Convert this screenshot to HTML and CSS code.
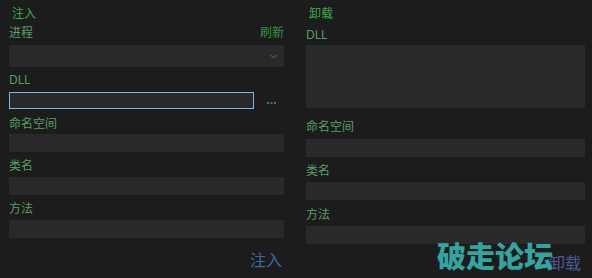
FILE: index.html
```html
<!DOCTYPE html>
<html lang="zh">

<head>
    <meta charset="UTF-8">
    <meta name="viewport" content="width=device-width, initial-scale=1.0">
    <title>注入</title>
    <link rel="stylesheet" href="styles.css">
</head>

<body>
    <main class="panels">
        <!-- 注入 -->
        <section class="panel panel-inject">
            <h2 class="panel-title">注入</h2>
            <div class="label-row l-proc">
                <span class="label">进程</span>
                <a class="refresh" href="#">刷新</a>
            </div>
            <div class="select">
                <svg class="chevron" width="7" height="5" viewBox="0 0 7 5">
                    <polyline points="0.5,1 3.5,4 6.5,1" fill="none" stroke="#6a6a6e" stroke-width="1"/>
                </svg>
            </div>
            <div class="label l-dll">DLL</div>
            <div class="file-row">
                <input class="box box-focus" type="text">
                <svg class="dots" width="9" height="3" viewBox="0 0 9 3">
                    <rect x="0" y="0" width="2" height="2" fill="#2f8a2f"/>
                    <rect x="3.5" y="0" width="2" height="2" fill="#2f8a2f"/>
                    <rect x="7" y="0" width="2" height="2" fill="#2f8a2f"/>
                </svg>
            </div>
            <div class="label l-ns">命名空间</div>
            <input class="box" type="text">
            <div class="label l-cls">类名</div>
            <input class="box" type="text">
            <div class="label l-mth">方法</div>
            <input class="box" type="text">
            <div class="actions"><button class="action">注入</button></div>
        </section>

        <!-- 卸载 -->
        <section class="panel panel-eject">
            <h2 class="panel-title">卸载</h2>
            <div class="label r-dll">DLL</div>
            <div class="list"></div>
            <div class="label r-ns">命名空间</div>
            <input class="box" type="text">
            <div class="label r-cls">类名</div>
            <input class="box" type="text">
            <div class="label r-mth">方法</div>
            <input class="box" type="text">
            <div class="actions actions-eject"><button class="action action-eject">卸载</button></div>
        </section>
    </main>

    <div class="watermark">破走论坛</div>
</body>

</html>
```

FILE: styles.css
```css
body {
    margin: 0;
    padding: 0;
    background-color: #1c1c1c;
    font-family: "Noto Sans", "Noto Sans CJK SC", sans-serif;
    font-size: 12px;
    color: #5c9c6a;
    width: 592px;
    height: 278px;
    overflow: hidden;
    position: relative;
}

.panels {
    display: flex;
    gap: 22px;
    padding-left: 9px;
}

.panel {
    display: flex;
    flex-direction: column;
}

.panel-inject {
    width: 275px;
}

.panel-eject {
    width: 279px;
}

.panel-title {
    margin: 4px 0 0 3px;
    height: 16px;
    line-height: 20px;
    font-size: 12px;
    font-weight: normal;
    color: #3bab4c;
}

.label {
    height: 16px;
    line-height: 20px;
}

.label-row {
    display: flex;
    justify-content: space-between;
    height: 16px;
    line-height: 20px;
}

.refresh {
    color: #3c8f3c;
    text-decoration: none;
}

.box {
    display: block;
    box-sizing: border-box;
    width: 100%;
    height: 18px;
    margin: 0;
    padding: 0 4px;
    border: none;
    background-color: #29292c;
    outline: none;
}

.box-focus {
    width: 245px;
    height: 17px;
    border: 1px solid #82b4e6;
}

.select {
    position: relative;
    height: 22px;
    margin-top: 6px;
    background-color: #29292c;
}

.chevron {
    position: absolute;
    right: 7px;
    top: 9px;
}

.file-row {
    display: flex;
    align-items: flex-end;
    margin-top: 6px;
}

.dots {
    margin: 0 0 4px 13px;
}

.list {
    height: 63px;
    margin-top: 4px;
    background-color: #29292c;
}

/* vertical rhythm, left */
.l-proc { margin-top: 3px; }
.l-dll { margin-top: 3px; }
.l-ns { margin-top: 5px; margin-bottom: 4px; }
.l-cls { margin-top: 4px; margin-bottom: 5px; }
.l-mth { margin-top: 4px; margin-bottom: 5px; }

/* vertical rhythm, right */
.r-dll { margin-top: 5px; }
.r-ns { margin-top: 9px; margin-bottom: 6px; }
.r-cls { margin-top: 4px; margin-bottom: 5px; }
.r-mth { margin-top: 5px; margin-bottom: 5px; }

.actions {
    display: flex;
    justify-content: flex-end;
    margin-top: 11px;
}

.actions-eject {
    margin-top: 8px;
}

.action {
    padding: 0 2px 0 0;
    border: none;
    background: none;
    font-family: "Noto Sans CJK SC", sans-serif;
    font-size: 16px;
    line-height: 20px;
    color: #3d6aa6;
    cursor: pointer;
}

.action-eject {
    color: #4c5a9c;
    padding-right: 4px;
}

.watermark {
    position: absolute;
    left: 437px;
    top: 235px;
    font-family: "Noto Sans CJK SC", sans-serif;
    font-size: 29px;
    font-weight: 900;
    line-height: 40px;
    color: #37a3a1;
}
```
